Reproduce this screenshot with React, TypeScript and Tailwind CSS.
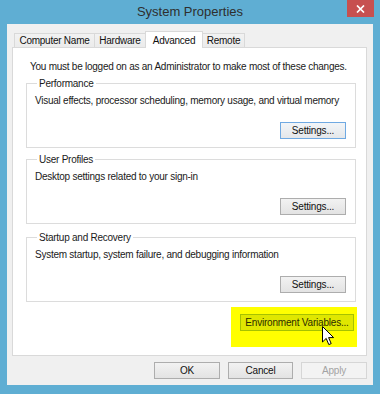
import React from 'react';

const font = "font-['Liberation_Sans',Arial,sans-serif]";
const body = 'text-[10px] leading-[13px] tracking-[-0.25px] whitespace-nowrap text-[#1a1a1a]';

type BtnProps = {
  label: string;
  variant?: 'normal' | 'default' | 'disabled' | 'marked';
  width?: string;
};

const Button: React.FC<BtnProps> = ({ label, variant = 'normal', width = 'w-[66px]' }) => {
  const styles: Record<string, string> = {
    normal: 'border-[#adadad] bg-gradient-to-b from-[#f2f2f2] to-[#e3e3e3] text-[#111]',
    default: 'border-[#6fa9e2] bg-gradient-to-b from-[#f2f5f8] to-[#e4e7ea] text-[#111]',
    disabled: 'border-[#d6d6d6] bg-[#f3f3f3] text-[#a3a3a3]',
    marked: 'border-[#a6c200] bg-[#e0e700] text-[#2c2c00]',
  };
  return (
    <button
      type="button"
      className={`${width} h-[17px] border text-[10px] leading-none tracking-[-0.2px] whitespace-nowrap flex items-center justify-center ${styles[variant]}`}
    >
      {label}
    </button>
  );
};

const GroupBox: React.FC<{ title: string; text: string; focused?: boolean; className?: string }> = ({
  title,
  text,
  focused,
  className = '',
}) => (
  <fieldset className={`border border-[#dcdcdc] pl-[8px] pr-[9px] pb-[8px] ${className}`}>
    <legend className={`ml-[2px] px-[2px] ${body}`}>{title}</legend>
    <p className={`mt-[4px] ${body}`}>{text}</p>
    <div className="mt-[15px] flex justify-end">
      <Button label="Settings..." variant={focused ? 'default' : 'normal'} />
    </div>
  </fieldset>
);

const tabs = [
  { label: 'Computer Name', w: 'w-[81px]' },
  { label: 'Hardware', w: 'w-[52px]' },
  { label: 'Advanced', w: 'w-[58px]', active: true },
  { label: 'Remote', w: 'w-[43px]' },
];

const Cursor = () => (
  <svg
    className="absolute left-[91px] top-[19px]"
    width="13"
    height="20"
    viewBox="0 0 13 20"
    aria-hidden
  >
    <path
      d="M0.5 0.5 L0.5 16 L4.2 12.4 L6.8 18.6 L9.2 17.6 L6.6 11.6 L11.6 11.6 Z"
      fill="#fff"
      stroke="#000"
      strokeWidth="1"
      strokeLinejoin="miter"
    />
  </svg>
);

export default function App() {
  return (
    <div className={`w-[380px] h-[394px] bg-[#5faed3] flex flex-col ${font}`}>
      {/* title bar */}
      <div className="h-[24px] grid grid-cols-[1fr_auto_1fr] items-start">
        <div />
        <div className="h-[24px] flex items-center text-[13px] text-[#2e2e2e] whitespace-nowrap">System Properties</div>
        <div className="flex justify-end pr-[6px]">
          <div className="w-[27px] h-[17px] bg-[#c75050] flex items-center justify-center">
            <svg width="9" height="8" viewBox="0 0 9 8" aria-hidden>
              <path d="M1 0.5 L8 7.5 M8 0.5 L1 7.5" stroke="#fff" strokeWidth="1.7" />
            </svg>
          </div>
        </div>
      </div>

      {/* client area */}
      <div className="flex-1 mx-[7px] mb-[9px] bg-[#f0f0f0] flex flex-col pt-[7px] pl-[5px] pr-[6px] pb-[6px]">
        {/* tabs */}
        <div className="flex items-end ml-[2px] h-[16px]">
          {tabs.map((t, i) =>
            t.active ? (
              <div
                key={t.label}
                className={`${t.w} h-[17px] -mb-px -ml-px relative z-10 bg-white border border-b-0 border-[#d9d9d9] text-[10px] tracking-[-0.25px] whitespace-nowrap text-[#111] flex items-center justify-center`}
              >
                {t.label}
              </div>
            ) : (
              <div
                key={t.label}
                className={`${t.w} h-[14px] ${i > 0 ? '-ml-px' : ''} bg-gradient-to-b from-[#f2f2f2] to-[#ebebeb] border border-b-0 border-[#d9d9d9] text-[10px] tracking-[-0.25px] whitespace-nowrap text-[#111] flex items-center justify-center`}
              >
                {t.label}
              </div>
            ),
          )}
        </div>

        {/* tab panel */}
        <div className="flex-1 bg-white border border-[#d9d9d9] pl-[13px] pr-[10px] pt-[12px] flex flex-col">
          <p className={`pl-[4px] ${body}`}>
            You must be logged on as an Administrator to make most of these changes.
          </p>
          <GroupBox
            className="mt-[4px]"
            title="Performance"
            text="Visual effects, processor scheduling, memory usage, and virtual memory"
            focused
          />
          <GroupBox className="mt-[5px]" title="User Profiles" text="Desktop settings related to your sign-in" />
          <GroupBox
            className="mt-[7px]"
            title="Startup and Recovery"
            text="System startup, system failure, and debugging information"
          />
          <div className="mt-[5px] self-end mr-[-1px] bg-[#ffff00] pl-[9px] pt-[7px] pr-[3px] pb-[16px] relative">
            <Button label="Environment Variables..." variant="marked" width="w-[114px]" />
            <Cursor />
          </div>
        </div>

        {/* dialog buttons */}
        <div className="mt-[6px] flex justify-end gap-[8px]">
          <Button label="OK" />
          <Button label="Cancel" width="w-[65px]" />
          <Button label="Apply" variant="disabled" />
        </div>
      </div>
    </div>
  );
}
